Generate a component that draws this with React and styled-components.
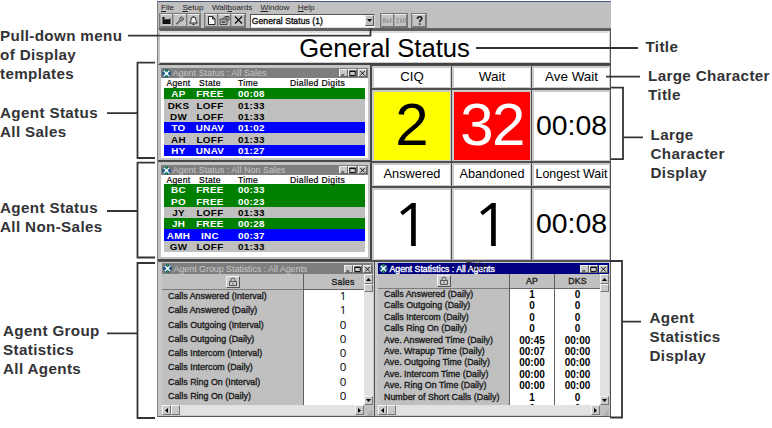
import React from "react";
import styled, { createGlobalStyle } from "styled-components";

const Global = createGlobalStyle`
  * { box-sizing: border-box; }
  body { margin: 0; background: #fff; font-family: "Liberation Sans", Arial, sans-serif; }
`;

const Page = styled.div`
  position: relative;
  display: grid;
  grid-template-columns: 157px 454px 161px;
  width: 772px;
  height: 428px;
  overflow: hidden;
  background: #fff;
`;

const Notes = styled.div`
  display: flex;
  flex-direction: column;
`;

const Note = styled.div`
  margin: ${(p) => p.$gap}px 0 0 ${(p) => p.$indent || 0}px;
  font-size: 15.2px;
  font-weight: bold;
  line-height: 19px;
  letter-spacing: 0.36px;
  color: #333336;
  white-space: pre;
`;

const Lines = styled.svg`
  position: absolute;
  inset: 0;
  pointer-events: none;
`;

const GhostTitle = styled.span`
  position: absolute;
  left: 466px;
  top: 261px;
  font-size: 10px;
  line-height: 12px;
  letter-spacing: 0.7px;
  color: #26262c;
`;

const Shell = styled.div`
  display: flex;
  flex-direction: column;
  margin-top: 1px;
  height: 416px;
  background: #c0c0c0;
  border-top: 1px solid #4a5488;
  border-left: 1px solid #808080;
  overflow: hidden;
`;

const MenuBar = styled.div`
  display: flex;
  gap: 8.4px;
  height: 11px;
  padding-left: 3px;
  font-size: 8.1px;
  line-height: 11px;
  color: #222;
  u { text-decoration-thickness: 0.6px; text-underline-offset: 1px; }
`;

const Toolbar = styled.div`
  display: flex;
  align-items: center;
  height: 15px;
  padding-left: 2px;
`;

const Group = styled.div`
  display: flex;
  margin-right: ${(p) => p.$after}px;
`;

const ToolButton = styled.div`
  display: grid;
  place-items: center;
  width: ${(p) => p.$w || 13.3}px;
  height: 13px;
  background: #c3c3c3;
  border: 1px solid;
  border-color: #eee #777 #777 #aaa;
  outline: 0.5px solid #777;
  svg { display: block; }
`;

const Picker = styled.div`
  display: flex;
  align-items: center;
  width: 125px;
  height: 14px;
  margin-right: 6px;
  padding-left: 1px;
  background: #fff;
  border: 1px solid;
  border-color: #555 #ddd #ddd #555;
  font-size: 8.6px;
  -webkit-text-stroke: 0.35px #111;
  letter-spacing: 0.05px;
  white-space: pre;
  color: #111;
`;

const PickerArrow = styled.div`
  display: grid;
  place-items: center;
  width: 9px;
  height: 11px;
  margin-left: auto;
  background: #c0c0c0;
  border: 1px solid;
  border-color: #eee #555 #555 #eee;
`;

const Banner = styled.div`
  display: flex;
  justify-content: center;
  height: 37px;
  padding-right: 1px;
  background: #fff;
  border-top: 3px solid #606060;
  border-bottom: 2px solid #444;
  border-left: 2px solid #c8c8c8;
  border-right: 1px solid #555;
  box-shadow: inset 0 2px #ddd, inset 0 -1px #ccc, inset -1px 0 #ccc;
  font-size: 25.6px;
  line-height: 34px;
  color: #000;
`;

const Board = styled.div`
  display: grid;
  grid-template-columns: 214px 239px;
  height: 196px;
`;

const Stack = styled.div`
  display: grid;
  grid-template-rows: 97px 99px;
`;

const StatusFrame = styled.div`
  padding: 3px 2px 1px 3px;
  background: #c4c4c4;
  border: solid #484848;
  border-width: 0 2px 2px 0;
`;

const TitleBar = styled.div`
  display: flex;
  align-items: center;
  height: ${(p) => p.$h || 10}px;
  padding: 0 1px;
  background: ${(p) => (p.$active ? "#000080" : "#7e7e7e")};
  color: ${(p) => (p.$active ? "#fff" : "#c6c6c6")};
  font-size: ${(p) => p.$size || 9}px;
  -webkit-text-stroke: ${(p) => (p.$active ? "0.35px #fff" : "0")};
  letter-spacing: ${(p) => p.$track}px;
  line-height: 10px;
  white-space: pre;
  svg { flex: none; }
`;

const Caption = styled.span`
  flex: 1;
  margin-left: 1.5px;
`;

const StatusBody = styled.div`
  height: ${(p) => p.$h}px;
  padding: 0 3px 0 3px;
  background: #fff;
`;

const AgentRow = styled.div`
  display: grid;
  grid-template-columns: 29px 34px 10px 43px 1fr;
  align-items: center;
  height: 11.35px;
  background: ${(p) => p.$bg};
  color: ${(p) => p.$fg};
  font-size: 9.9px;
  font-weight: bold;
  letter-spacing: 0.3px;
  line-height: 11px;
  white-space: pre;
  text-align: center;
`;

const AgentHead = styled(AgentRow)`
  height: ${(p) => p.$h}px;
  font-size: 8.6px;
  font-weight: normal;
  letter-spacing: 0.35px;
  -webkit-text-stroke: 0.2px #000;
`;

const LeftCell = styled.span`
  grid-column: 4;
  padding-left: 1px;
  text-align: left;
`;

const Digits = styled.span`
  padding-left: 10px;
  text-align: left;
`;

const Metrics = styled.div`
  display: grid;
  grid-template-columns: 80px 80px 79px;
  grid-template-rows: 24px 73px 25px 74px;
  background: #505050;
`;

const Tile = styled.div`
  display: flex;
  align-items: center;
  justify-content: center;
  margin: 1px 1px 1px 0;
  padding-bottom: ${(p) => p.$lift || 0}px;
  border: solid #cbcbcb;
  border-width: 2px 1px 1px 2px;
  background: ${(p) => p.$bg || "#fff"};
  color: ${(p) => p.$fg || "#000"};
  font-family: ${(p) => (p.$plain ? '"Open Sans", ' : "")}"Liberation Sans", sans-serif;
  font-size: ${(p) => p.$size}px;
  letter-spacing: ${(p) => p.$track || 0}px;
  line-height: 1;
  white-space: nowrap;
`;

const Bottom = styled.div`
  display: grid;
  grid-template-columns: 217px 236px;
  height: 156px;
`;

const StatsWindow = styled.div`
  display: flex;
  flex-direction: column;
  padding: ${(p) => p.$pad};
  background: #c8c8c8;
  border: solid #555;
  border-width: 1px 1px 1px 0;
  overflow: hidden;
`;

const Pane = styled.div`
  display: grid;
  grid-template-columns: 1fr 9px;
  flex: 1;
  min-height: 0;
`;

const Table = styled.div`
  display: grid;
  grid-template-columns: ${(p) => p.$cols};
  min-height: 0;
  overflow: hidden;
`;

const Column = styled.div`
  display: flex;
  flex-direction: column;
  min-width: 0;
  background: ${(p) => (p.$label ? "#c0c0c0" : "#fff")};
  border-right: ${(p) => (p.$last ? "0" : "1px solid #606060")};
  overflow: hidden;
`;

const ColumnHead = styled.div`
  display: flex;
  flex: none;
  align-items: center;
  justify-content: center;
  height: ${(p) => p.$h}px;
  padding-left: ${(p) => p.$shift || 0}px;
  margin-bottom: ${(p) => p.$after}px;
  background: #c0c0c0;
  border-bottom: 1px solid ${(p) => (p.$label ? "#7c7c7c" : "#666")};
  font-size: 8.8px;
  -webkit-text-stroke: 0.35px #222;
  letter-spacing: 0.2px;
  color: #222;
`;

const Label = styled.div`
  flex: none;
  height: ${(p) => p.$h}px;
  padding-left: 6px;
  font-size: 8.9px;
  -webkit-text-stroke: 0.35px #1c1c1c;
  line-height: ${(p) => p.$h}px;
  letter-spacing: ${(p) => p.$track}px;
  color: #1c1c1c;
  white-space: pre;
`;

const Value = styled.div`
  flex: none;
  height: ${(p) => p.$h}px;
  padding-left: ${(p) => p.$shift || 0}px;
  font-family: ${(p) => (p.$bold ? "" : '"Open Sans", ')}"Liberation Sans", sans-serif;
  font-size: ${(p) => p.$size}px;
  font-weight: ${(p) => (p.$bold ? "bold" : "normal")};
  line-height: ${(p) => p.$h}px;
  text-align: center;
  color: #000;
`;

const ScrollColumn = styled.div`
  display: flex;
  flex-direction: column;
  background: #e2e2e2;
`;

const ScrollRow = styled.div`
  display: flex;
  height: 10px;
  background: #e2e2e2;
`;

const ScrollPart = styled.div`
  display: grid;
  place-items: center;
  flex: none;
  width: 9px;
  height: ${(p) => p.$h || 9}px;
  margin-top: ${(p) => (p.$pushDown ? "auto" : 0)};
  margin-left: ${(p) => (p.$pushRight ? "auto" : 0)};
  background: #c8c8c8;
  border: 1px solid;
  border-color: #f4f4f4 #777 #777 #f4f4f4;
`;

const GripBox = styled.div`
  width: 9px;
  height: 10px;
  background: #c0c0c0;
`;

const LockButton = styled.div`
  display: grid;
  place-items: center;
  width: 14px;
  height: 12px;
  background: #cacaca;
  border: 1px solid;
  border-color: #f4f4f4 #555 #555 #f4f4f4;
`;

const WindowButton = styled.span`
  display: grid;
  place-items: center;
  width: 9px;
  height: 8px;
  margin-left: ${(p) => p.$gap || 0}px;
  background: #c8c8c8;
  border: 1px solid;
  border-color: #eee #666 #666 #eee;
`;

const AppIcon = () => (
  <svg width="9" height="9" viewBox="0 0 9 9">
    <circle cx="4.5" cy="4.5" r="4.3" fill="#14405a" />
    <path d="M1.7 1.7 7.3 7.3M7.3 1.7 1.7 7.3" stroke="#e8ffff" strokeWidth="1.6" />
    <path d="M4.5 .3v2.500M4.5 6.200v2.500" stroke="#2b9f5c" strokeWidth="1.5" />
    <path d="M.3 4.5h2.500M6.200 4.5h2.500" stroke="#2a60b8" strokeWidth="1.5" />
    <circle cx="4.5" cy="4.5" r="1.1" fill="#fff" />
  </svg>
);

const glyphs = {
  min: "M1 5h3",
  max: "M.5 1h5.5v4.5H.5zM.5 1.5h5.5",
  close: "M1 1l4.5 4.5M5.5 1 1 5.5",
};

const WindowControls = () => (
  <>
    {["min", "max", "close"].map((k) => (
      <WindowButton key={k} $gap={k === "close" ? 1.5 : 0}>
        <svg width="7" height="6.5" viewBox="0 0 6.5 6.5">
          <path d={glyphs[k]} fill="none" stroke="#111" strokeWidth="1" />
        </svg>
      </WindowButton>
    ))}
  </>
);

const Arrow = ({ dir }) => {
  const d = {
    up: "M0 4 2.5 1 5 4z",
    down: "M0 1 2.5 4 5 1z",
    left: "M4 0 1 2.5 4 5z",
    right: "M1 0 4 2.5 1 5z",
  }[dir];
  return (
    <svg width="5" height="5" viewBox="0 0 5 5">
      <path d={d} fill="#000" />
    </svg>
  );
};

const ToolIcon = ({ children }) => (
  <svg width="11" height="11" viewBox="0 0 11 11" fill="none" stroke="#222" strokeWidth="1">
    {children}
  </svg>
);

const Lock = () => (
  <svg width="10" height="10" viewBox="0 0 10 10" fill="none" stroke="#555" strokeWidth="1">
    <path d="M3 4.5V3a2 2 0 0 1 4 0v1.5M1.5 4.5h7v4h-7zM5 5.7v1.8" />
  </svg>
);

const palette = {
  FREE: ["#008000", "#fff"],
  LOFF: ["#c0c0c0", "#000"],
  UNAV: ["#0000ff", "#fff"],
  INC: ["#0000ff", "#fff"],
};

const sales = [
  ["AP", "FREE", "00:08"],
  ["DKS", "LOFF", "01:33"],
  ["DW", "LOFF", "01:33"],
  ["TO", "UNAV", "01:02"],
  ["AH", "LOFF", "01:33"],
  ["HY", "UNAV", "01:27"],
];

const nonSales = [
  ["BC", "FREE", "00:33"],
  ["PO", "FREE", "00:23"],
  ["JY", "LOFF", "01:33"],
  ["JH", "FREE", "00:28"],
  ["AMH", "INC", "00:37"],
  ["GW", "LOFF", "01:33"],
];

const StatusWindow = ({ title, agents, headHeight, bodyHeight }) => (
  <StatusFrame>
    <TitleBar $track={0.02}>
      <AppIcon />
      <Caption>{title}</Caption>
      <WindowControls />
    </TitleBar>
    <StatusBody $h={bodyHeight}>
      <AgentHead $h={headHeight} $bg="#fff" $fg="#000">
        <span>Agent</span>
        <span>State</span>
        <LeftCell>Time</LeftCell>
        <Digits>Dialled Digits</Digits>
      </AgentHead>
      {agents.map(([name, state, time]) => (
        <AgentRow key={name} $bg={palette[state][0]} $fg={palette[state][1]}>
          <span>{name}</span>
          <span>{state}</span>
          <LeftCell>{time}</LeftCell>
        </AgentRow>
      ))}
    </StatusBody>
  </StatusFrame>
);

const groupStats = [
  ["Calls Answered (Interval)", 1],
  ["Calls Answered (Daily)", 1],
  ["Calls Outgoing (Interval)", 0],
  ["Calls Outgoing (Daily)", 0],
  ["Calls Intercom (Interval)", 0],
  ["Calls Intercom (Daily)", 0],
  ["Calls Ring On (Interval)", 0],
  ["Calls Ring On (Daily)", 0],
];

const agentStats = [
  ["Calls Answered (Daily)", "1", "0"],
  ["Calls Outgoing (Daily)", "0", "0"],
  ["Calls Intercom (Daily)", "0", "0"],
  ["Calls Ring On (Daily)", "0", "0"],
  ["Ave. Answered Time (Daily)", "00:45", "00:00"],
  ["Ave. Wrapup Time (Daily)", "00:07", "00:00"],
  ["Ave. Outgoing Time (Daily)", "00:00", "00:00"],
  ["Ave. Intercom Time (Daily)", "00:00", "00:00"],
  ["Ave. Ring On Time (Daily)", "00:00", "00:00"],
  ["Number of Short Calls (Daily)", "1", "0"],
  ["", "0", "0"],
];

const VerticalScroll = () => (
  <ScrollColumn>
    <ScrollPart $h={10}><Arrow dir="up" /></ScrollPart>
    <ScrollPart $h={8} />
    <ScrollPart $pushDown><Arrow dir="down" /></ScrollPart>
  </ScrollColumn>
);

const HorizontalScroll = () => (
  <ScrollRow>
    <ScrollPart $h={10}><Arrow dir="left" /></ScrollPart>
    <ScrollPart $h={10} />
    <ScrollPart $h={10} $pushRight><Arrow dir="right" /></ScrollPart>
    <GripBox>
      <svg width="9" height="10" viewBox="0 0 9 10">
        <path d="M1 9.5 8.5 2M4 9.5 8.5 5M7 9.5 8.5 8" stroke="#777" strokeWidth=".8" />
      </svg>
    </GripBox>
  </ScrollRow>
);

export default function App() {
  return (
    <Page>
      <Global />
      <Notes>
        <Note $gap={26}>{"Pull-down menu\nof Display\ntemplates"}</Note>
        <Note $gap={20}>{"Agent Status\nAll Sales"}</Note>
        <Note $gap={57}>{"Agent Status\nAll Non-Sales"}</Note>
        <Note $gap={85} $indent={3}>{"Agent Group\nStatistics\nAll Agents"}</Note>
      </Notes>

      <Shell>
        <MenuBar>
          <span><u>F</u>ile</span>
          <span><u>S</u>etup</span>
          <span>Wall<u>b</u>oards</span>
          <span><u>W</u>indow</span>
          <span><u>H</u>elp</span>
        </MenuBar>
        <Toolbar>
          <Group $after={5}>
            <ToolButton>
              <ToolIcon><path d="M1.5 2v7h8V3L7.5 5V3.500L5.500 5V3.500L3.500 5V2z" fill="#111" stroke="none" /></ToolIcon>
            </ToolButton>
            <ToolButton>
              <ToolIcon><path d="M2 9 6 5M3 9.500 7 5.500M6 5.500C5 3.500 6.500 1.500 8.500 2L7 3.500 8 4.500 9.500 3C10 5 8 6.500 6.500 5.500" stroke="#444" strokeWidth=".9" /></ToolIcon>
            </ToolButton>
            <ToolButton>
              <ToolIcon><path d="M1.500 8C3 7 3 6 3 4.500a2.500 2.500 0 0 1 5 0C8 6 8 7 9.500 8zM5.500 1v1M4.500 9.500h2" fill="#eee" /></ToolIcon>
            </ToolButton>
          </Group>
          <Group $after={5}>
            <ToolButton>
              <ToolIcon><path d="M2.500 1.500h4l2.500 2.500v5.500H2.500zM6.500 1.500V4H9" fill="#fff" /></ToolIcon>
            </ToolButton>
            <ToolButton>
              <ToolIcon><path d="M1 4h7v5.500H1zM2.500 6h4M2.500 7.500h4M4 4l2-2.500h4V5L8 6M6 3h3" stroke="#333" strokeWidth=".9" /></ToolIcon>
            </ToolButton>
            <ToolButton>
              <ToolIcon><path d="M2 1.500 9 8.500M9 1.500 2 8.500" strokeWidth="1.3" stroke="#111" /></ToolIcon>
            </ToolButton>
          </Group>
          <Picker>
            General Status (1)
            <PickerArrow><Arrow dir="down" /></PickerArrow>
          </Picker>
          <Group $after={5}>
            <ToolButton>
              <ToolIcon><path d="M1.500 8V3.500h1.500V8M1.500 6h2M5 3v5M5 5.500h2V8M8.500 3v5M8.500 5h1.500" stroke="#8e8e8e" strokeWidth=".8" /></ToolIcon>
            </ToolButton>
            <ToolButton>
              <ToolIcon><path d="M1 3.500h2.500L1.500 8H4M5 8l1-4.500L7 8M8.500 3v5M10 3v5" stroke="#8e8e8e" strokeWidth=".8" /></ToolIcon>
            </ToolButton>
          </Group>
          <ToolButton $w={14}>
            <ToolIcon><path d="M3.500 4C3.500 1 8 1 7.800 3.800 7.500 5 5.700 5 5.700 7M5.700 8.300v1.500" strokeWidth="1.7" stroke="#222" /></ToolIcon>
          </ToolButton>
        </Toolbar>

        <Banner>General Status</Banner>

        <Board>
          <Stack>
            <StatusWindow title="Agent Status : All Sales" agents={sales} headHeight={10} bodyHeight={80} />
            <StatusWindow title="Agent Status : All Non Sales" agents={nonSales} headHeight={9} bodyHeight={82} />
          </Stack>
          <Metrics>
            <Tile $size={13.2} $lift={1}>CIQ</Tile>
            <Tile $size={13.5} $lift={1}>Wait</Tile>
            <Tile $size={13.4} $lift={1}>Ave Wait</Tile>
            <Tile $size={60} $lift={2} $bg="#ffff00">2</Tile>
            <Tile $size={60} $lift={2} $bg="#ff0000" $fg="#fff" $track={-1.5}>32</Tile>
            <Tile $size={28.4} $lift={2}>00:08</Tile>
            <Tile $size={12.8} $lift={2}>Answered</Tile>
            <Tile $size={12.7} $lift={2}>Abandoned</Tile>
            <Tile $size={12.4} $lift={2}>Longest Wait</Tile>
            <Tile $size={60} $lift={4} $plain>1</Tile>
            <Tile $size={60} $lift={4} $plain>1</Tile>
            <Tile $size={28.4} $lift={2}>00:08</Tile>
          </Metrics>
        </Board>

        <Bottom>
          <StatsWindow $pad="1px 1px 1px 4px">
            <TitleBar $track={-0.08} $h={11}>
              <AppIcon />
              <Caption>Agent Group Statistics : All Agents</Caption>
              <WindowControls />
            </TitleBar>
            <Pane>
              <Table $cols="142px 1fr">
                <Column $label>
                  <ColumnHead $h={16} $after={-1} $label><LockButton><Lock /></LockButton></ColumnHead>
                  {groupStats.map(([name]) => (
                    <Label key={name} $h={14.25} $track={0}>{name}</Label>
                  ))}
                </Column>
                <Column $last>
                  <ColumnHead $h={16} $after={-1} $shift={18}>Sales</ColumnHead>
                  {groupStats.map(([name, v]) => (
                    <Value key={name} $h={14.25} $size={11.5} $shift={18}>{v}</Value>
                  ))}
                </Column>
              </Table>
              <VerticalScroll />
            </Pane>
            <HorizontalScroll />
          </StatsWindow>

          <StatsWindow $pad="1px 1px 1px 3px">
            <TitleBar $active $track={0} $size={8.7} $h={11}>
              <AppIcon />
              <Caption>Agent Statistics : All Agents</Caption>
              <WindowControls />
            </TitleBar>
            <Pane>
              <Table $cols="132px 45px 1fr">
                <Column $label>
                  <ColumnHead $h={15} $after={0} $label><LockButton><Lock /></LockButton></ColumnHead>
                  {agentStats.map(([name]) => (
                    <Label key={name} $h={11.4} $track={0}>{name}</Label>
                  ))}
                </Column>
                {[1, 2].map((i) => (
                  <Column key={i} $last={i === 2}>
                    <ColumnHead $h={15} $after={0}>{i === 1 ? "AP" : "DKS"}</ColumnHead>
                    {agentStats.map((row) => (
                      <Value key={row[0]} $h={11.4} $size={10} $bold>{row[i]}</Value>
                    ))}
                  </Column>
                ))}
              </Table>
              <VerticalScroll />
            </Pane>
            <HorizontalScroll />
          </StatsWindow>
        </Bottom>
      </Shell>

      <Notes>
        <Note $gap={37} $indent={34.5}>Title</Note>
        <Note $gap={10} $indent={37}>{"Large Character\nTitle"}</Note>
        <Note $gap={21} $indent={39.5}>{"Large\nCharacter\nDisplay"}</Note>
        <Note $gap={126} $indent={38.5}>{"Agent\nStatistics\nDisplay"}</Note>
      </Notes>

      <GhostTitle>Title</GhostTitle>
      <Lines width="772" height="428" fill="none" stroke="#343438" strokeWidth="1.8">
        <path d="M128 35.700H370.500V28" />
        <path d="M155 62.700H137.500V158H155M107 113.200H137.500" />
        <path d="M155 162.700H137.500V257.500H155M107 211H137.500" />
        <path d="M155 263H137.500V418H155M107 333.300H137.500" />
        <path d="M476 48H638" />
        <path d="M606 76.700H640" />
        <path d="M611 87.700H623V159.200H611M623 137.300H643" />
        <path d="M610 261H622V417.500H610M622 321.600H641" />
      </Lines>
    </Page>
  );
}
